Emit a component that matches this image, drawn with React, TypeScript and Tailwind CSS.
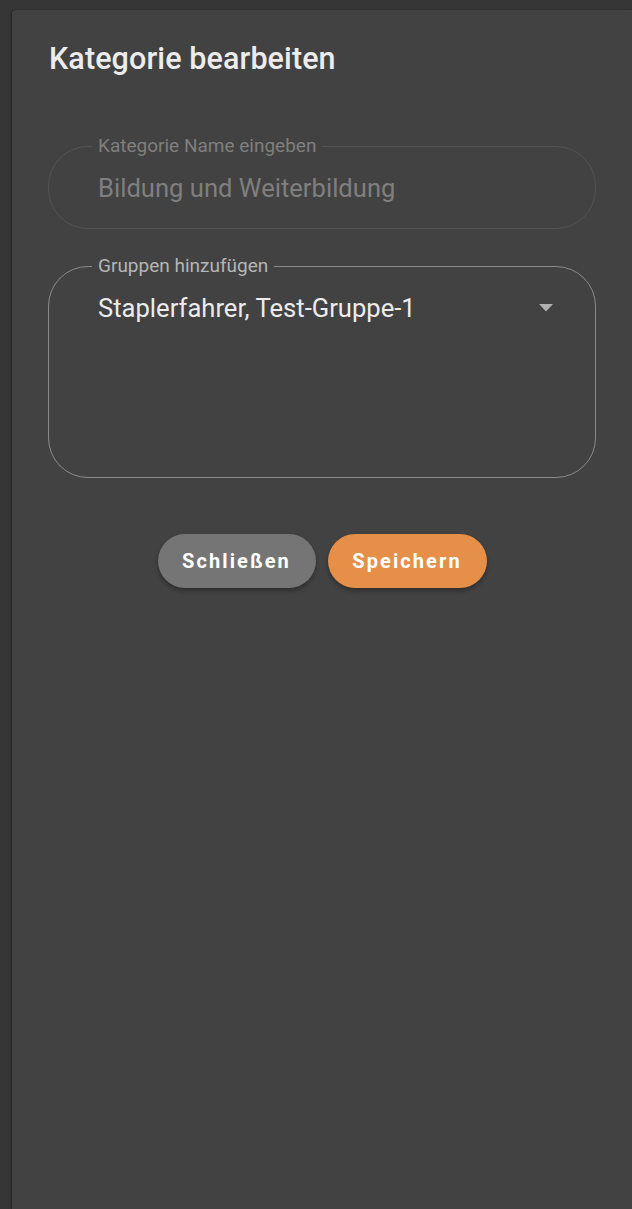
export default function App() {
  return (
    <div
      className="min-h-[1209px] bg-[#363636] pl-[12px] pt-[10px]"
      style={{ fontFamily: 'Roboto, "Noto Sans", sans-serif' }}
    >
      <div className="flex min-h-[1199px] flex-col rounded-tl-[4px] bg-[#424242] px-[36px] shadow-[-1px_0_2px_rgba(0,0,0,0.35)]">
        {/* Title */}
        <h2 className="pt-[24px] pl-[1px] text-[30.5px] font-medium leading-[50px] tracking-[0.1px] text-[#ececec]">
          Kategorie bearbeiten
        </h2>

        {/* Name field (disabled) */}
        <div className="relative mt-[62px] flex h-[83px] items-center rounded-[40px] border border-[#535353] pl-[49px]">
          <span className="absolute -top-[12px] left-[43px] bg-[#424242] px-[6px] text-[19px] leading-[22px] text-[#7f7f7f]">
            Kategorie Name eingeben
          </span>
          <span className="text-[25.6px] leading-[30px] text-[#7f7f7f]">
            Bildung und Weiterbildung
          </span>
        </div>

        {/* Group select */}
        <div className="relative mt-[37px] h-[212px] rounded-[40px] border border-[#8a8a8a] pl-[49px] pr-[42px] pt-[26px]">
          <span className="absolute -top-[12px] left-[43px] bg-[#424242] px-[6px] text-[19px] leading-[22px] text-[#b5b5b5]">
            Gruppen hinzufügen
          </span>
          <div className="flex items-center justify-between">
            <span className="text-[25.6px] leading-[30px] text-[#ececec]">
              Staplerfahrer, Test-Gruppe-1
            </span>
            <svg width="14" height="8" viewBox="0 0 14 8" className="fill-[#b0b0b0]">
              <path d="M0 0h14L7 7.5z" />
            </svg>
          </div>
        </div>

        {/* Actions */}
        <div className="mt-[56px] flex justify-center gap-[12px]">
          <button className="h-[54px] w-[158px] rounded-full bg-[#757575] text-[20px] font-bold tracking-[2.1px] text-white shadow-[0_3px_4px_rgba(0,0,0,0.3)]">
            Schließen
          </button>
          <button className="h-[54px] w-[159px] rounded-full bg-[#e68f49] text-[20px] font-bold tracking-[2.1px] text-white shadow-[0_3px_4px_rgba(0,0,0,0.3)]">
            Speichern
          </button>
        </div>
      </div>
    </div>
  );
}
